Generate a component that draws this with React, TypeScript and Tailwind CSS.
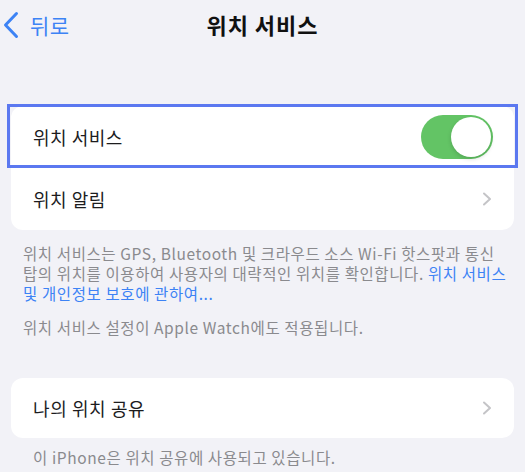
import React from "react";

const font = "font-['Noto_Sans_CJK_KR','Noto_Sans',sans-serif]";

function Chevron() {
  return (
    <svg width="10" height="14" viewBox="0 0 10 14" className="shrink-0">
      <path
        d="M2 1.5 L8 7 L2 12.5"
        fill="none"
        stroke="#c4c4c7"
        strokeWidth="2"
        strokeLinecap="round"
        strokeLinejoin="round"
      />
    </svg>
  );
}

function Toggle({ on }: { on: boolean }) {
  return (
    <div
      className={`relative w-[72px] h-[44px] rounded-full ${on ? "bg-[#63c465]" : "bg-[#e9e9eb]"}`}
    >
      <div
        className={`absolute top-[2px] w-[40px] h-[40px] rounded-full bg-white shadow-[0_2px_4px_rgba(0,0,0,0.15)] ${on ? "right-[2px]" : "left-[2px]"}`}
      />
    </div>
  );
}

export default function App() {
  return (
    <div className={`w-[525px] h-[472px] overflow-hidden bg-[#f2f2f7] ${font}`}>
      {/* Nav bar */}
      <div className="grid grid-cols-[1fr_auto_1fr] items-center h-[50px]">
        <div className="flex items-center pl-[3px] text-[#3d83f5]">
          <svg width="16" height="28" viewBox="0 0 16 28">
            <path
              d="M13.5 2.5 L2.5 14 L13.5 25.5"
              fill="none"
              stroke="currentColor"
              strokeWidth="3"
              strokeLinecap="round"
              strokeLinejoin="round"
            />
          </svg>
          <span className="ml-[11px] text-[21px] tracking-[0.5px] leading-none">뒤로</span>
        </div>
        <div className="text-[22px] tracking-[1px] font-semibold text-[#111] leading-none -mt-[2px]">
          위치 서비스
        </div>
        <div />
      </div>

      {/* Card 1 */}
      <div className="mt-[56px] mx-[11px] bg-white rounded-[12px]">
        <div className="relative h-[62px] flex items-center justify-between pl-[22px] pr-[21px]">
          <span className="text-[18px] tracking-[0.5px] text-[#1c1c1e]">위치 서비스</span>
          <Toggle on />
          <div className="absolute -left-[4px] -right-[4px] -top-[2px] bottom-0 border-[3px] border-[#5b78f0] pointer-events-none" />
        </div>
        <div className="h-[62px] flex items-center justify-between pl-[22px] pr-[22px]">
          <span className="text-[18px] tracking-[0.5px] text-[#1c1c1e]">위치 알림</span>
          <Chevron />
        </div>
      </div>

      {/* Footer 1 */}
      <div className="pl-[23px] pt-[13px] text-[15.5px] tracking-[0.6px] leading-[20px] text-[#8a8a8e] whitespace-nowrap">
        <p>
          위치 서비스는 GPS, Bluetooth 및 크라우드 소스 Wi-Fi 핫스팟과 통신
          <br />
          탑의 위치를 이용하여 사용자의 대략적인 위치를 확인합니다.{" "}
          <span className="text-[#3d83f5]">위치 서비스</span>
          <br />
          <span className="text-[#3d83f5]">및 개인정보 보호에 관하여...</span>
        </p>
        <p className="mt-[14px]">위치 서비스 설정이 Apple Watch에도 적용됩니다.</p>
      </div>

      {/* Card 2 */}
      <div className="mt-[41px] mx-[11px] bg-white rounded-[12px]">
        <div className="h-[60px] flex items-center justify-between pl-[22px] pr-[22px]">
          <span className="text-[18px] tracking-[0.6px] text-[#1c1c1e]">나의 위치 공유</span>
          <Chevron />
        </div>
      </div>
      <p className="mt-[9px] pl-[33px] text-[15.5px] tracking-[0.6px] leading-[20px] text-[#8a8a8e]">
        이 iPhone은 위치 공유에 사용되고 있습니다.
      </p>
    </div>
  );
}
